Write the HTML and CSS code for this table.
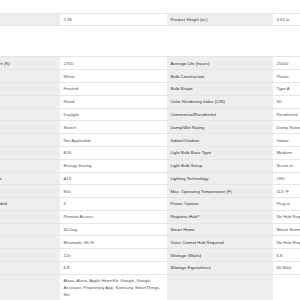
FILE: index.html
```html
<!DOCTYPE html>
<html lang="en">
<head>
<meta charset="utf-8">
<title>Specifications</title>
<link rel="stylesheet" href="styles.css">
</head>
<body>
<div class="specs">
  <div class="group group-dims">
    <div class="label">Product Depth (in.)</div><div class="value">2.36</div>
    <div class="label">Product Height (in.)</div><div class="value">4.65 in</div>
  </div>
  <div class="group group-details">
    <div class="label">Bulb Color Temperature (K)</div><div class="value">2700</div>
    <div class="label">Average Life (hours)</div><div class="value">25000</div>

    <div class="label">Bulb Color</div><div class="value">White</div>
    <div class="label">Bulb Construction</div><div class="value">Plastic</div>

    <div class="label">Bulb Finish</div><div class="value">Frosted</div>
    <div class="label">Bulb Shape</div><div class="value">Type A</div>

    <div class="label">Bulb Type</div><div class="value">Flood</div>
    <div class="label">Color Rendering Index (CRI)</div><div class="value">90</div>

    <div class="label">Color Family</div><div class="value">Daylight</div>
    <div class="label">Commercial/Residential</div><div class="value">Residential</div>

    <div class="label">Control Type</div><div class="value">Switch</div>
    <div class="label">Damp/Wet Rating</div><div class="value">Damp Rated</div>

    <div class="label">Dimmable</div><div class="value">Not Applicable</div>
    <div class="label">Indoor/Outdoor</div><div class="value">Indoor</div>

    <div class="label">Base Code</div><div class="value">E26</div>
    <div class="label">Light Bulb Base Type</div><div class="value">Medium</div>

    <div class="label">Features</div><div class="value">Energy Saving</div>
    <div class="label">Light Bulb Setup</div><div class="value">Screw-in</div>

    <div class="label">Light Bulb Shape Code</div><div class="value">A19</div>
    <div class="label">Lighting Technology</div><div class="value">LED</div>

    <div class="label">Light Output</div><div class="value">800</div>
    <div class="label">Max. Operating Temperature (F)</div><div class="value">113 °F</div>

    <div class="label">Number of Bulbs Included</div><div class="value">4</div>
    <div class="label">Power Options</div><div class="value">Plug-in</div>

    <div class="label">Product Features</div><div class="value">Remote Access</div>
    <div class="label">Requires Hub?</div><div class="value">No Hub Required</div>

    <div class="label">Returnable</div><div class="value">90-Day</div>
    <div class="label">Smart Home</div><div class="value">Smart Home</div>

    <div class="label">Smart Protocol</div><div class="value">Bluetooth, Wi-Fi</div>
    <div class="label">Voice Control Hub Required</div><div class="value">No Hub Required</div>

    <div class="label">Voltage</div><div class="value">120</div>
    <div class="label">Wattage (Watts)</div><div class="value">6.8</div>

    <div class="label">Watts</div><div class="value">6.8</div>
    <div class="label">Wattage Equivalence</div><div class="value">60 Watt</div>

    <div class="label">Works With</div><div class="value">Alexa, Alexa, Apple HomeKit, Google, Google Assistant, Proprietary App, Samsung SmartThings, Siri</div>
    <div class="label"></div><div class="value"></div>
  </div>
</div>
</body>
</html>
```
FILE: styles.css
```css
html, body {
  margin: 0;
  padding: 0;
  background: #ffffff;
}

body {
  font-family: "Liberation Sans", Arial, sans-serif;
  font-size: 4.3px;
  line-height: 7px;
  overflow: hidden;
}

.specs {
  margin-left: -46px;
  width: 426px;
  padding-top: 12.7px;
  display: flex;
  flex-direction: column;
  gap: 30px;
}

.group {
  display: grid;
  grid-template-columns: 106px 107px 106px 107px;
  border-top: 1px solid #e6e6e6;
}

.label,
.value {
  padding: 2.4px 3.5px;
  border-bottom: 1px solid #e6e6e6;
}

.label {
  background: #eeeeee;
  color: #333333;
}

.value {
  background: #ffffff;
  color: #555555;
}
```
